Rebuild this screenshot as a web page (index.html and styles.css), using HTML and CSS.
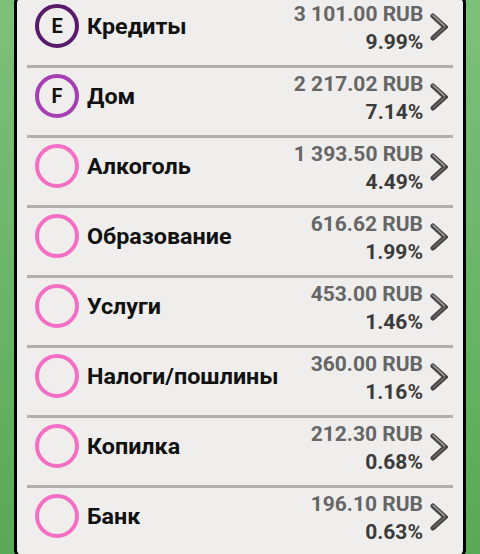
FILE: index.html
```html
<!DOCTYPE html>
<html lang="ru">
<head>
<meta charset="utf-8">
<link rel="stylesheet" href="styles.css">
</head>
<body>
<div class="panel">
  <div class="row">
    <div class="badge badge-e">E</div>
    <div class="name">Кредиты</div>
    <div class="nums"><div class="amount">3 101.00 RUB</div><div class="pct">9.99%</div></div>
    <svg class="chev" viewBox="0 0 18 28"><polyline class="c-dark" points="3,3 15,14 3,25"/><polyline class="c-light" points="3.2,2.4 14.4,12.8" /><polyline class="c-light2" points="14.6,14.6 3.4,24.6" /></svg>
  </div>
  <div class="row">
    <div class="badge badge-f">F</div>
    <div class="name">Дом</div>
    <div class="nums"><div class="amount">2 217.02 RUB</div><div class="pct">7.14%</div></div>
    <svg class="chev" viewBox="0 0 18 28"><polyline class="c-dark" points="3,3 15,14 3,25"/><polyline class="c-light" points="3.2,2.4 14.4,12.8" /><polyline class="c-light2" points="14.6,14.6 3.4,24.6" /></svg>
  </div>
  <div class="row">
    <div class="badge"></div>
    <div class="name">Алкоголь</div>
    <div class="nums"><div class="amount">1 393.50 RUB</div><div class="pct">4.49%</div></div>
    <svg class="chev" viewBox="0 0 18 28"><polyline class="c-dark" points="3,3 15,14 3,25"/><polyline class="c-light" points="3.2,2.4 14.4,12.8" /><polyline class="c-light2" points="14.6,14.6 3.4,24.6" /></svg>
  </div>
  <div class="row">
    <div class="badge"></div>
    <div class="name">Образование</div>
    <div class="nums"><div class="amount">616.62 RUB</div><div class="pct">1.99%</div></div>
    <svg class="chev" viewBox="0 0 18 28"><polyline class="c-dark" points="3,3 15,14 3,25"/><polyline class="c-light" points="3.2,2.4 14.4,12.8" /><polyline class="c-light2" points="14.6,14.6 3.4,24.6" /></svg>
  </div>
  <div class="row">
    <div class="badge"></div>
    <div class="name">Услуги</div>
    <div class="nums"><div class="amount">453.00 RUB</div><div class="pct">1.46%</div></div>
    <svg class="chev" viewBox="0 0 18 28"><polyline class="c-dark" points="3,3 15,14 3,25"/><polyline class="c-light" points="3.2,2.4 14.4,12.8" /><polyline class="c-light2" points="14.6,14.6 3.4,24.6" /></svg>
  </div>
  <div class="row">
    <div class="badge"></div>
    <div class="name">Налоги/пошлины</div>
    <div class="nums"><div class="amount">360.00 RUB</div><div class="pct">1.16%</div></div>
    <svg class="chev" viewBox="0 0 18 28"><polyline class="c-dark" points="3,3 15,14 3,25"/><polyline class="c-light" points="3.2,2.4 14.4,12.8" /><polyline class="c-light2" points="14.6,14.6 3.4,24.6" /></svg>
  </div>
  <div class="row">
    <div class="badge"></div>
    <div class="name">Копилка</div>
    <div class="nums"><div class="amount">212.30 RUB</div><div class="pct">0.68%</div></div>
    <svg class="chev" viewBox="0 0 18 28"><polyline class="c-dark" points="3,3 15,14 3,25"/><polyline class="c-light" points="3.2,2.4 14.4,12.8" /><polyline class="c-light2" points="14.6,14.6 3.4,24.6" /></svg>
  </div>
  <div class="row last">
    <div class="badge"></div>
    <div class="name">Банк</div>
    <div class="nums"><div class="amount">196.10 RUB</div><div class="pct">0.63%</div></div>
    <svg class="chev" viewBox="0 0 18 28"><polyline class="c-dark" points="3,3 15,14 3,25"/><polyline class="c-light" points="3.2,2.4 14.4,12.8" /><polyline class="c-light2" points="14.6,14.6 3.4,24.6" /></svg>
  </div>
</div>
</body>
</html>
```
FILE: styles.css
```css
html, body {
  margin: 0;
  padding: 0;
  height: 554px;
  overflow: hidden;
}
body {
  background: linear-gradient(to bottom, #7dc07a 0%, #6bb568 50%, #5aa957 100%);
  font-family: Roboto, "Noto Sans", sans-serif;
}
.panel {
  margin: -5px 14px 0 14px;
  background: #efeeec;
  border: 3px solid #000;
  border-radius: 8px;
  padding: 0 10px;
}
.row {
  box-sizing: border-box;
  height: 70px;
  display: flex;
  align-items: flex-start;
  padding-top: 6px;
  border-bottom: 3px solid #b1b0ad;
}
.row.last {
  border-bottom: none;
  height: 67px;
}
.badge {
  box-sizing: border-box;
  width: 44px;
  height: 44px;
  flex: none;
  margin-left: 8px;
  border: 4px solid #f46fc4;
  border-radius: 50%;
  display: flex;
  align-items: center;
  justify-content: center;
  font-weight: 700;
  font-size: 20px;
  color: #111;
}
.badge-e { border-color: #5a1a6c; }
.badge-f { border-color: #a53fb2; }
.name {
  margin-left: 8px;
  font-weight: 700;
  font-size: 22px;
  line-height: 44px;
  padding-top: 1px;
  color: #111;
  transform: scaleX(1.06);
  transform-origin: left center;
}
.nums {
  margin-left: auto;
  margin-top: -2px;
  text-align: right;
  font-weight: 700;
  font-size: 20px;
  line-height: 24px;
  transform: scaleX(1.05);
  transform-origin: right center;
}
.amount {
  color: #666;
}
.pct {
  margin-top: 4px;
  color: #3b3b3b;
}
.chev {
  flex: none;
  width: 18px;
  height: 28px;
  margin: 9px 5px 0 7px;
}
.c-dark {
  fill: none;
  stroke: #454545;
  stroke-width: 5;
  stroke-linecap: round;
  stroke-linejoin: miter;
}
.c-light {
  fill: none;
  stroke: #9a9a9a;
  stroke-width: 1.6;
  stroke-linecap: round;
}
.c-light2 {
  fill: none;
  stroke: #6e6e6e;
  stroke-width: 1.4;
  stroke-linecap: round;
}
```
